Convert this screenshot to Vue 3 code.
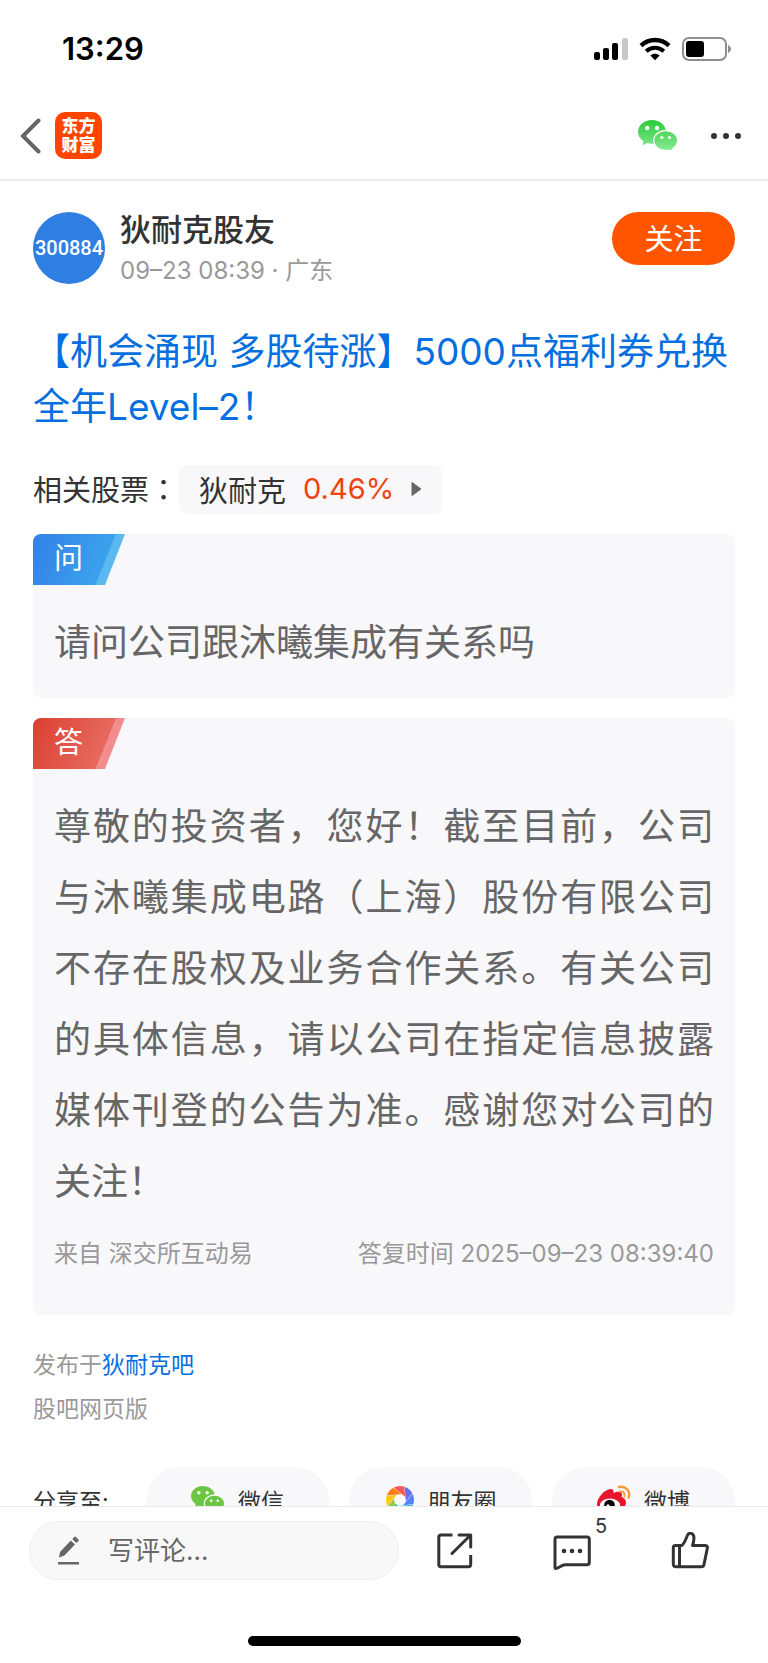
<script setup>
import { ref } from 'vue';

const followed = ref(false);
const comment = ref("");

const stock = { name: "狄耐克", rate: "0.46%" };

// 快门图标的八个叶片颜色
const blades = ["#fb5552", "#6b6cf0", "#4f86f2", "#3fb6f0", "#35c08a", "#8bcb3c", "#fbc91b", "#fd7e14"];
</script>


<template>
  <div class="page">
    <div class="status-bar">
      <span class="time">13:29</span>
      <div class="status-icons">
        <svg width="34" height="24" viewBox="0 0 34 24">
          <rect x="0" y="15" width="6" height="8" rx="2" fill="#000" />
          <rect x="9" y="11" width="6" height="12" rx="2" fill="#000" />
          <rect x="18" y="6" width="6" height="17" rx="2" fill="#000" />
          <rect x="28" y="1" width="6" height="22" rx="2" fill="#c8c8c8" />
        </svg>
        <svg width="32" height="24" viewBox="0 0 32 24">
          <path d="M2 8.6C10 1.2 22 1.2 30 8.6" fill="none" stroke="#000" stroke-width="4.4" />
          <path d="M7.2 14.2C12.4 9.6 19.6 9.6 24.8 14.2" fill="none" stroke="#000" stroke-width="4.2" />
          <path d="M11.4 18.4C14 16.2 18 16.2 20.6 18.4L16 23.2Z" fill="#000" />
        </svg>
        <svg width="50" height="24" viewBox="0 0 50 24">
          <rect x="1" y="1" width="43" height="22" rx="6" fill="none" stroke="#8e8e8e" stroke-width="2" />
          <rect x="4" y="4" width="18" height="16" rx="3" fill="#000" />
          <path d="M46 8C50 9.6 50 14.4 46 16Z" fill="#8e8e8e" />
        </svg>
      </div>
    </div>

    <div class="nav-bar">
      <button class="icon-button" aria-label="返回">
        <svg width="21" height="36" viewBox="0 0 21 36">
          <path d="M18.5 2.5L3 18L18.5 33.5" fill="none" stroke="#666" stroke-width="4" stroke-linecap="round" />
        </svg>
      </button>
      <div class="logo"><span>东方</span><span>财富</span></div>
      <button class="icon-button wechat-button" aria-label="分享到微信">
        <svg width="40" height="32" viewBox="0 0 40 32">
          <defs>
            <linearGradient id="wechat-green" gradientUnits="userSpaceOnUse" x1="0" y1="0" x2="0" y2="32">
              <stop offset="0" stop-color="#2bcb3a" />
              <stop offset="1" stop-color="#8eeb98" />
            </linearGradient>
          </defs>
          <path d="M14 0C6.200 0 0 5.200 0 11.900C0 15.800 2.200 19.200 5.600 21.300L4.300 25.400L9 23.100C10.600 23.600 12.300 23.800 14 23.800C21.800 23.800 28 18.600 28 11.900S21.800 0 14 0Z" fill="url(#wechat-green)" />
          <path d="M27.700 10.600C21 10.600 15.700 15 15.700 20.600S21 30.600 27.700 30.600C29.300 30.600 30.700 30.400 32 30L35.600 31.800L34.700 28.700C37.700 26.800 39.600 23.900 39.600 20.600C39.600 15 34.300 10.600 27.700 10.600Z" fill="url(#wechat-green)" stroke="#fff" stroke-width="1.200" />
          <circle cx="9.200" cy="8" r="2.200" fill="#fff" />
          <circle cx="19" cy="8" r="2.200" fill="#fff" />
          <circle cx="23.800" cy="17.500" r="1.600" fill="#fff" />
          <circle cx="31.500" cy="17.500" r="1.600" fill="#fff" />
        </svg>
      </button>
      <button class="icon-button" aria-label="更多">
        <svg width="30" height="8" viewBox="0 0 30 8">
          <circle cx="3" cy="4" r="3" fill="#333" />
          <circle cx="15" cy="4" r="3" fill="#333" />
          <circle cx="27" cy="4" r="3" fill="#333" />
        </svg>
      </button>
    </div>

    <main class="content">
      <div class="author">
        <div class="avatar">300884</div>
        <div class="author-info">
          <div class="author-name">狄耐克股友</div>
          <div class="author-time">09–23 08:39 · 广东</div>
        </div>
        <button class="follow" @click="followed = !followed">{{ followed ? "已关注" : "关注" }}</button>
      </div>

      <a href="#" class="promo">【机会涌现 多股待涨】5000点福利券兑换全年Level–2！</a>

      <div class="related">
        <span class="related-label">相关股票<span class="colon">：</span></span>
        <a href="#" class="stock">
          <span>{{ stock.name }}</span>
          <span class="rate">{{ stock.rate }}</span>
          <svg width="11" height="16" viewBox="0 0 11 16">
            <path d="M1 1.500L10 8L1 14.500Z" fill="#666" stroke="#666" stroke-linejoin="round" />
          </svg>
        </a>
      </div>

      <section class="card">
        <div class="tag ask">问</div>
        <p class="card-text">请问公司跟沐曦集成有关系吗</p>
      </section>

      <section class="card answer-card">
        <div class="tag answer">答</div>
        <p class="card-text">尊敬的投资者，您好！截至目前，公司与沐曦集成电路（上海）股份有限公司不存在股权及业务合作关系。有关公司的具体信息，请以公司在指定信息披露媒体刊登的公告为准。感谢您对公司的关注！</p>
        <div class="card-foot">
          <span>来自 深交所互动易</span>
          <span>答复时间 2025–09–23 08:39:40</span>
        </div>
      </section>

      <div class="meta">
        <div>发布于<a href="#" class="bar-link">狄耐克吧</a></div>
        <div><a href="#" class="web-link">股吧网页版</a></div>
      </div>

      <div class="share">
        <span class="share-label">分享至:</span>
        <button class="share-item">
          <svg width="34" height="28" viewBox="0 0 40 33">
            <path d="M14 0C6.200 0 0 5.200 0 11.900C0 15.800 2.200 19.200 5.600 21.300L4.300 25.400L9 23.100C10.600 23.600 12.300 23.800 14 23.800C21.800 23.800 28 18.600 28 11.900S21.800 0 14 0Z" fill="#6cc644" />
            <path d="M27.700 10.600C21 10.600 15.700 15 15.700 20.600S21 30.600 27.700 30.600C29.300 30.600 30.700 30.400 32 30L35.600 31.800L34.700 28.700C37.700 26.800 39.600 23.900 39.600 20.600C39.600 15 34.300 10.600 27.700 10.600Z" fill="#6cc644" stroke="#f8f8fa" stroke-width="1.500" />
            <circle cx="9.200" cy="8" r="2" fill="#fff" />
            <circle cx="19" cy="8" r="2" fill="#fff" />
            <circle cx="23.800" cy="17.500" r="1.500" fill="#fff" />
            <circle cx="31.500" cy="17.500" r="1.500" fill="#fff" />
          </svg>
          微信
        </button>
        <button class="share-item">
          <svg width="30" height="30" viewBox="-15 -15 30 30">
            <path
              v-for="(color, i) in blades"
              :key="color"
              d="M-6.200 -12.500A14 14 0 0 1 4 -13.400L5.200 -3.200Z"
              :fill="color"
              :transform="`rotate(${i * 45})`"
            />
          </svg>
          朋友圈
        </button>
        <button class="share-item">
          <svg width="34" height="30" viewBox="0 0 34 30">
            <path d="M0 19C0 13 7 5 13 4C16 3.500 17 5.500 16.500 8C20 6.200 25 6 25 9.500C25 10.600 24.500 11.500 24.500 12C27 12.800 29 14.400 29 17.500C29 23 22 28 13.500 28S0 24 0 19Z" fill="#e6162d" />
            <ellipse cx="13" cy="20" rx="10" ry="6.500" fill="#fff" />
            <circle cx="12.500" cy="20" r="5.300" fill="#000" />
            <circle cx="11" cy="21" r="1.700" fill="#fff" />
            <path d="M22 2C28.500 0.600 34 6 31.600 12.500" fill="none" stroke="#ff9933" stroke-width="2.400" stroke-linecap="round" />
            <path d="M23 6.600C26.200 6 28.400 8.400 27.400 11.400" fill="none" stroke="#ff9933" stroke-width="2" stroke-linecap="round" />
          </svg>
          微博
        </button>
      </div>
    </main>

    <footer class="bottom-bar">
      <div class="bottom-row">
        <label class="comment-box">
          <svg width="22" height="30" viewBox="0 0 22 30">
            <path d="M1 21.500L2 16L12.800 4.600L17 8.600L6.400 19.600Z" fill="#666" />
            <path d="M14.200 3.100L16.400 0.900C16.800 0.500 17.400 0.500 17.800 0.900L20.500 3.500C20.900 3.900 20.900 4.500 20.500 4.900L18.400 7.100Z" fill="#666" />
            <rect x="0" y="26" width="21" height="2.600" rx="0.500" fill="#666" />
          </svg>
          <input type="text" v-model="comment" placeholder="写评论..." aria-label="写评论">
        </label>
        <div class="actions">
          <button class="icon-button" aria-label="转发">
            <svg width="36" height="38" viewBox="0 0 36 38" fill="none" stroke="#333" stroke-width="3" stroke-linecap="round" stroke-linejoin="round">
              <path d="M15.500 3H4Q1.800 3 1.800 5.200V32.600Q1.800 34.800 4 34.800H31.500Q33.700 34.800 33.700 32.600V23" stroke-linecap="butt" />
              <path d="M22 3H33.700V15M33.400 3.300L15 21.500" />
            </svg>
          </button>
          <button class="icon-button reply" aria-label="评论">
            <svg width="38" height="38" viewBox="0 0 38 38">
              <path d="M4 5H34Q36.300 5 36.300 7.300V30.500Q36.300 32.800 34 32.800H12C8 33 6 36.500 2.500 36.500C2 36.500 2 36 2 35.500V7.300Q2 5 4 5Z" fill="none" stroke="#333" stroke-width="3" stroke-linejoin="round" />
              <circle cx="11" cy="19" r="2.300" fill="#333" />
              <circle cx="19" cy="19" r="2.300" fill="#333" />
              <circle cx="27" cy="19" r="2.300" fill="#333" />
            </svg>
            <span class="count">5</span>
          </button>
          <button class="icon-button" aria-label="点赞">
            <svg width="38" height="38" viewBox="0 0 38 38" fill="none" stroke="#333" stroke-width="3" stroke-linejoin="round">
              <path d="M4.500 13.500H11C14 10.500 15 6.500 16.600 3C17.800 0.600 21.500 0.800 22.600 3.600C23.600 6.400 22.600 10 21.600 13.500H34C36 13.500 36.600 14.600 36.300 16.200L33 32.500Q32.500 34.800 30.500 34.800H5.500Q2.300 34.800 2.300 31.800V15.700Q2.300 13.500 4.500 13.500Z" />
              <path d="M8.500 13.500V34.500" />
            </svg>
          </button>
        </div>
      </div>
      <div class="home-indicator"></div>
    </footer>
  </div>
</template>

<style>
body {
  margin: 0;
  background-color: #fff;
}
</style>

<style scoped>
/* 整页：顶部、底部固定，中间内容滚动 */
.page {
  display: flex;
  flex-direction: column;
  height: 100vh;
  font-family: Inter, "Noto Sans CJK SC", sans-serif;
  font-weight: 400;
  color: #333;
  background-color: #fff;
}

.page * {
  box-sizing: border-box;
}

button {
  padding: 0;
  border: none;
  background: none;
  font: inherit;
  color: inherit;
  cursor: pointer;
}

a {
  color: inherit;
  text-decoration: none;
}

svg {
  display: block;
  flex-shrink: 0;
}

/* 状态栏 */
.status-bar {
  display: flex;
  flex-shrink: 0;
  align-items: center;
  justify-content: space-between;
  height: 90px;
  padding: 7px 36px 0 62px;
}

.time {
  font-size: 31px;
  font-weight: 600;
  color: #000;
}

.status-icons {
  display: flex;
  gap: 11px;
}

/* 导航栏 */
.nav-bar {
  display: flex;
  flex-shrink: 0;
  align-items: center;
  height: 91px;
  padding: 2px 27px 0 20px;
  border-bottom: 2px solid #ebebeb;
}

.icon-button {
  display: flex;
  align-items: center;
  justify-content: center;
}

.logo {
  display: flex;
  flex-direction: column;
  align-items: center;
  justify-content: center;
  width: 47px;
  height: 47px;
  margin-left: 14px;
  border-radius: 10px;
  background-color: #ff4400;
  color: #fff;
  font-size: 17px;
  font-weight: 900;
  line-height: 19px;
}

.wechat-button {
  margin-left: auto;
  margin-right: 33px;
}

/* 正文 */
.content {
  flex: 1;
  min-height: 0;
  overflow-y: auto;
  scrollbar-width: none;
  padding: 31px 33px 0;
}

.author {
  display: flex;
  align-items: flex-start;
}

.avatar {
  display: flex;
  align-items: center;
  justify-content: center;
  width: 72px;
  height: 72px;
  border-radius: 50%;
  background-color: #2f7fe3;
  color: #fff;
  font-family: Roboto, sans-serif;
  font-size: 20px;
  font-weight: 500;
}

.author-info {
  flex: 1;
  margin-left: 15px;
}

.author-name {
  font-size: 31px;
  font-weight: 500;
  line-height: 36px;
}

.author-time {
  font-size: 24px;
  line-height: 46px;
  color: #999;
}

.follow {
  width: 123px;
  height: 53px;
  padding-bottom: 3px;
  border-radius: 27px;
  background-color: #ff5500;
  color: #fff;
  font-size: 29px;
}

.promo {
  display: block;
  margin-top: 30px;
  font-size: 37px;
  line-height: 55px;
  color: #066fe0;
}

.related {
  display: flex;
  align-items: center;
  margin-top: 31px;
  font-size: 29px;
}

.related-label {
  padding-bottom: 3px;
}

.colon {
  font-family: "Noto Sans CJK TC", sans-serif;
}

.stock {
  display: flex;
  align-items: center;
  gap: 17px;
  height: 49px;
  margin-left: 1px;
  padding: 0 20px 2px;
  border-radius: 8px;
  background-color: #f8f8fa;
}

.rate {
  color: #f0430f;
}

/* 问答卡片 */
.card {
  margin-top: 20px;
  padding-bottom: 20px;
  border-radius: 8px;
  background-color: #f8f8fa;
  overflow: hidden;
}

.tag {
  width: 92px;
  height: 51px;
  padding-left: 21px;
  color: #fff;
  font-size: 29px;
  line-height: 50px;
  clip-path: polygon(0 0, 100% 0, 72px 100%, 0 100%);
}

.ask {
  background: linear-gradient(112deg, #3380e4, #3ba2ee 77px, #5cb9f0 77px);
}

.answer {
  background: linear-gradient(112deg, #dc4030, #e6695f 77px, #f38d8d 77px);
}

.card-text {
  margin: 0;
  padding: 22px 21px 0;
  font-size: 37px;
  line-height: 71px;
  color: #666;
  text-align: justify;
}

.answer-card {
  padding-bottom: 45px;
}

.card-foot {
  display: flex;
  justify-content: space-between;
  margin-top: 21px;
  padding: 0 21px;
  font-size: 24px;
  line-height: 32px;
  color: #999;
}

.meta {
  margin-top: 28px;
  font-size: 23px;
  line-height: 44px;
  color: #999;
}

.bar-link {
  color: #066fe0;
}

/* 分享 */
.share {
  display: flex;
  align-items: center;
  gap: 20px;
  margin-top: 36px;
  padding-bottom: 30px;
  font-size: 23px;
}

.share-label {
  width: 93px;
  padding-bottom: 2px;
}

.share-item {
  display: flex;
  flex: 1;
  align-items: center;
  justify-content: center;
  gap: 13px;
  height: 68px;
  padding-bottom: 2px;
  border-radius: 34px;
  background-color: #f8f8fa;
}

/* 底部评论栏 */
.bottom-bar {
  flex-shrink: 0;
  padding-bottom: 17px;
  border-top: 1px solid #ebebeb;
  background-color: #fff;
}

.bottom-row {
  display: flex;
  align-items: center;
  padding: 14px 59px 0 29px;
}

.comment-box {
  display: flex;
  flex: 1;
  align-items: center;
  min-width: 0;
  height: 59px;
  padding: 0 28px;
  border: 1px solid #eee;
  border-radius: 30px;
  background-color: #f8f8f8;
}

.comment-box input {
  flex: 1;
  min-width: 0;
  margin-left: 28px;
  padding: 0;
  border: none;
  outline: none;
  background: none;
  color: #333;
  font: inherit;
  font-size: 26px;
}

.comment-box input::placeholder {
  color: #666;
  opacity: 1;
}

.actions {
  display: flex;
  gap: 80px;
  margin-left: 38px;
}

.reply {
  position: relative;
}

.count {
  position: absolute;
  left: 42px;
  top: -18px;
  font-size: 20px;
  line-height: 24px;
}

.home-indicator {
  width: 273px;
  height: 10px;
  margin: 56px auto 0;
  border-radius: 5px;
  background-color: #000;
}
</style>
